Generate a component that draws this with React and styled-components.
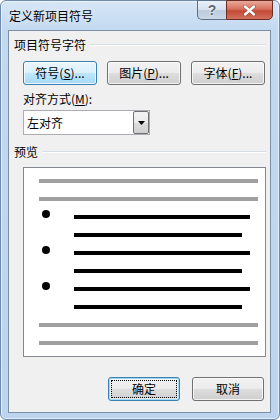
import React from "react";
import styled, { createGlobalStyle, css } from "styled-components";

const GlobalStyle = createGlobalStyle`
  html, body {
    margin: 0;
    padding: 0;
    background: #ffffff;
  }
  body {
    font-family: "Noto Sans CJK SC", "Liberation Sans", sans-serif;
    font-size: 12px;
    color: #000;
  }
`;

const previewRows = [
  { kind: "gray" },
  { kind: "gray" },
  { kind: "black", bullet: true, long: true },
  { kind: "black", long: false },
  { kind: "black", bullet: true, long: true },
  { kind: "black", long: false },
  { kind: "black", bullet: true, long: true },
  { kind: "black", long: false },
  { kind: "gray" },
  { kind: "gray" },
];

function App() {
  return (
    <>
      <GlobalStyle />
      <Window>
        <TitleBar>
          <Title>定义新项目符号</Title>
          <Caption>
            <HelpButton>?</HelpButton>
            <CloseButton>
              <svg width="13" height="11" viewBox="0 0 13 11">
                <path
                  d="M2 1.5 L11 9.5 M11 1.5 L2 9.5"
                  stroke="#3a1a16"
                  strokeWidth="3.6"
                  strokeLinecap="round"
                  opacity="0.45"
                />
                <path
                  d="M2 1.5 L11 9.5 M11 1.5 L2 9.5"
                  stroke="#ffffff"
                  strokeWidth="2.4"
                  strokeLinecap="round"
                />
              </svg>
            </CloseButton>
          </Caption>
        </TitleBar>

        <Client>
          <GroupHeader>
            <span>项目符号字符</span>
          </GroupHeader>
          <Indent>
            <ButtonRow>
              <Button $hot>
                符号(<u>S</u>)...
              </Button>
              <Button>
                图片(<u>P</u>)...
              </Button>
              <Button>
                字体(<u>F</u>)...
              </Button>
            </ButtonRow>
            <FieldLabel>
              对齐方式(<u>M</u>):
            </FieldLabel>
            <Combo>
              <ComboText>左对齐</ComboText>
              <ComboArrow>
                <svg width="7" height="4" viewBox="0 0 7 4">
                  <path d="M0 0 H7 L3.5 4 Z" fill="#000" />
                </svg>
              </ComboArrow>
            </Combo>
          </Indent>

          <GroupHeader $gap>
            <span>预览</span>
          </GroupHeader>
          <Indent>
            <Preview>
              {previewRows.map((row, i) => (
                <PreviewRow key={i}>
                  {row.kind === "gray" ? (
                    <GrayLine />
                  ) : (
                    <>
                      <BulletSlot>{row.bullet && <Bullet />}</BulletSlot>
                      <BlackLine $long={row.long} />
                    </>
                  )}
                </PreviewRow>
              ))}
            </Preview>
          </Indent>

          <Footer>
            <Button $default $narrow>
              <FocusRing>确定</FocusRing>
            </Button>
            <Button $narrow>取消</Button>
          </Footer>
        </Client>
      </Window>
    </>
  );
}

export default App;

const Window = styled.div`
  width: 280px;
  height: 420px;
  box-sizing: border-box;
  display: flex;
  flex-direction: column;
  border: 1px solid #6f8aab;
  border-radius: 6px;
  background: linear-gradient(180deg, #d6e6f7 0px, #c3d9f0 28px, #bcd4ee 100%);
  box-shadow: inset 0 0 0 1px rgba(255, 255, 255, 0.55);
`;

const TitleBar = styled.div`
  height: 29px;
  display: flex;
  align-items: flex-start;
  justify-content: space-between;
  padding-left: 8px;
`;

const Title = styled.div`
  margin-top: 7px;
  line-height: 16px;
  font-size: 12px;
  color: #000;
  text-shadow: 0 0 6px rgba(255, 255, 255, 0.9);
`;

const Caption = styled.div`
  display: flex;
  margin-right: 6px;
  margin-top: -1px;
`;

const captionBase = css`
  height: 20px;
  box-sizing: border-box;
  display: flex;
  align-items: center;
  justify-content: center;
  border: 1px solid #5f7089;
`;

const HelpButton = styled.div`
  ${captionBase};
  width: 29px;
  border-right: none;
  border-radius: 0 0 0 5px;
  background: linear-gradient(180deg, #e9f0f8 0%, #d5e1ee 50%, #bccbdd 51%, #c9d7e7 100%);
  color: #5c6470;
  font-family: "Liberation Sans", sans-serif;
  font-weight: bold;
  font-size: 14px;
  text-shadow: 0 0 2px #fff, 0 0 2px #fff;
`;

const CloseButton = styled.div`
  ${captionBase};
  width: 47px;
  border-color: #6b2b23;
  border-radius: 0 0 5px 0;
  background: linear-gradient(180deg, #e9a99b 0%, #d7705e 45%, #c24a36 55%, #d2705c 100%);
`;

const Client = styled.div`
  flex: 1;
  margin: 0 8px 6px 7px;
  border: 1px solid #7d8fa5;
  background: #f0f0f0;
  display: flex;
  flex-direction: column;
`;

const GroupHeader = styled.div`
  display: flex;
  align-items: center;
  gap: 4px;
  height: 14px;
  line-height: 14px;
  margin-top: ${(p) => (p.$gap ? "10px" : "7px")};
  padding: 0 4px 0 5px;

  &:after {
    content: "";
    flex: 1;
    height: 0;
    border-top: 1px solid #d5dfe5;
    border-bottom: 1px solid #ffffff;
  }
`;

const Indent = styled.div`
  padding-left: 14px;
  display: flex;
  flex-direction: column;
`;

const ButtonRow = styled.div`
  display: flex;
  gap: 10px;
  margin-top: 9px;
`;

const Button = styled.div`
  width: ${(p) => (p.$narrow ? "72px" : "74px")};
  height: 24px;
  box-sizing: border-box;
  display: flex;
  align-items: center;
  justify-content: center;
  border: 1px solid #707070;
  border-radius: 3px;
  background: linear-gradient(180deg, #f2f2f2 0%, #ebebeb 50%, #dddddd 51%, #cfcfcf 100%);
  box-shadow: inset 0 0 0 1px rgba(255, 255, 255, 0.75);
  line-height: 14px;

  u {
    text-decoration: underline;
    text-underline-offset: 1px;
  }

  ${(p) =>
    p.$hot &&
    css`
      border-color: #3c7fb1;
      background: linear-gradient(180deg, #eaf6fd 0%, #d9f0fc 50%, #bee6fd 51%, #a7d9f5 100%);
    `}

  ${(p) =>
    p.$default &&
    css`
      border-color: #3c7fb1;
      box-shadow: inset 0 0 0 1px #9fd9f5, inset 0 0 0 2px rgba(255, 255, 255, 0.5);
    `}
`;

const FocusRing = styled.span`
  display: flex;
  align-items: center;
  justify-content: center;
  width: 64px;
  height: 16px;
  border: 1px dotted #000;
`;

const FieldLabel = styled.div`
  margin-top: 7px;
  height: 14px;
  line-height: 14px;

  u {
    text-underline-offset: 1px;
  }
`;

const Combo = styled.div`
  margin-top: 4px;
  width: 127px;
  height: 25px;
  box-sizing: border-box;
  display: flex;
  align-items: stretch;
  border: 1px solid #abadb3;
  background: #ffffff;
`;

const ComboText = styled.div`
  flex: 1;
  display: flex;
  align-items: center;
  padding-left: 3px;
`;

const ComboArrow = styled.div`
  width: 16px;
  margin: 0px;
  box-sizing: border-box;
  display: flex;
  align-items: center;
  justify-content: center;
  border: 1px solid #707070;
  border-radius: 2px;
  background: linear-gradient(180deg, #f2f2f2 0%, #ebebeb 50%, #dddddd 51%, #cfcfcf 100%);
`;

const Preview = styled.div`
  margin-top: 8px;
  width: 243px;
  height: 190px;
  box-sizing: border-box;
  border: 1px solid #828790;
  background: #ffffff;
  padding: 4px 7px 0 15px;
  display: flex;
  flex-direction: column;
`;

const PreviewRow = styled.div`
  height: 18px;
  display: flex;
  align-items: center;
`;

const GrayLine = styled.div`
  flex: 1;
  height: 4px;
  background: #a0a0a0;
`;

const BulletSlot = styled.div`
  width: 35px;
  height: 18px;
  display: flex;
  align-items: center;
`;

const Bullet = styled.div`
  width: 8px;
  height: 8px;
  margin-left: 3px;
  margin-bottom: 7px;
  border-radius: 50%;
  background: #000;
`;

const BlackLine = styled.div`
  width: ${(p) => (p.$long ? "176px" : "168px")};
  height: 4px;
  background: #000;
`;

const Footer = styled.div`
  margin-top: 20px;
  display: flex;
  justify-content: flex-end;
  gap: 12px;
  padding-right: 6px;
`;
